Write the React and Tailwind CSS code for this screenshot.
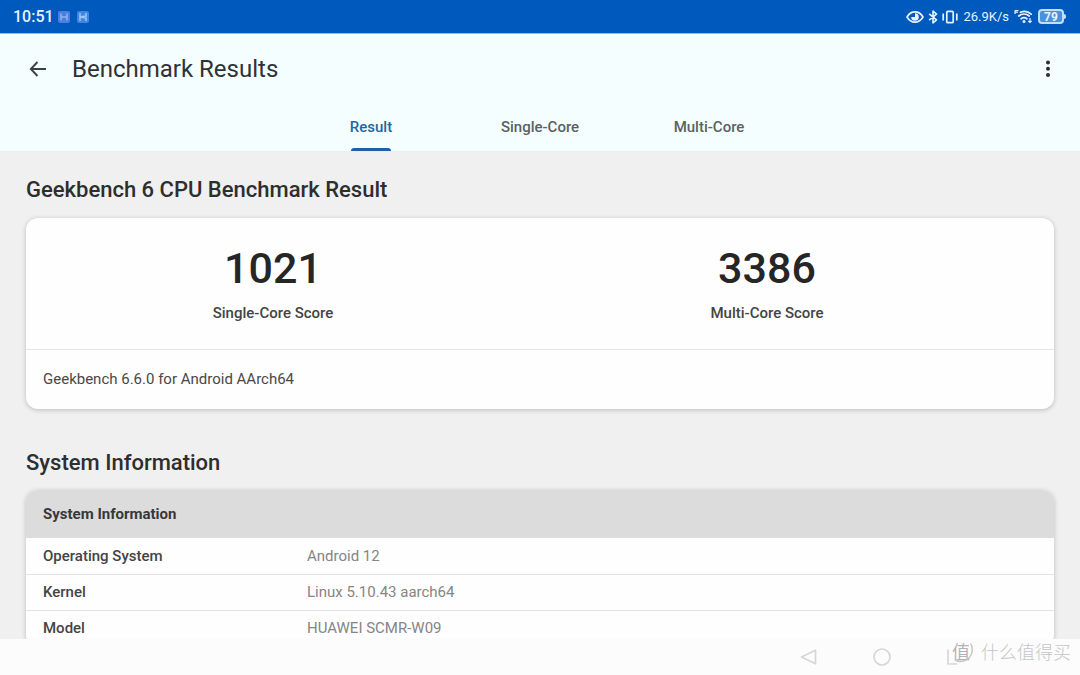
import { useState } from "react";

const TABS = ["Result", "Single-Core", "Multi-Core"];

const SCORES = [
  { value: "1021", label: "Single-Core Score" },
  { value: "3386", label: "Multi-Core Score" },
];

const SYSTEM_ROWS = [
  ["Operating System", "Android 12"],
  ["Kernel", "Linux 5.10.43 aarch64"],
  ["Model", "HUAWEI SCMR-W09"],
];

function EyeIcon() {
  return (
    <svg viewBox="0 0 18 14" className="h-[14px] w-[18px]" aria-hidden="true">
      <path d="M1 7C3 3.600 5.800 1.900 9 1.900S15 3.600 17 7c-2 3.400-4.800 5.100-8 5.100S3 10.400 1 7Z" fill="none" stroke="currentColor" strokeWidth="1.600" />
      <path d="M9 3.200A3.800 3.800 0 1 1 5.200 7H9Z" fill="currentColor" />
    </svg>
  );
}

function BluetoothIcon() {
  return (
    <svg viewBox="0 0 10 14" className="h-[14px] w-[10px]" aria-hidden="true">
      <path d="M1.200 3.800 8.500 9.800 5 13V1L8.500 4.200 1.200 10.200" fill="none" stroke="currentColor" strokeWidth="1.600" strokeLinejoin="round" />
    </svg>
  );
}

function VibrateIcon() {
  return (
    <svg viewBox="0 0 16 14" className="h-[14px] w-4" aria-hidden="true">
      <rect x="4.800" y="1.300" width="6.400" height="11.400" rx="1" fill="none" stroke="currentColor" strokeWidth="1.700" />
      <path d="M1.200 3.500v7M14.800 3.500v7" stroke="currentColor" strokeWidth="1.700" />
    </svg>
  );
}

function WifiIcon() {
  return (
    <svg viewBox="0 0 19 15" className="h-[15px] w-[19px]" aria-hidden="true">
      <g fill="none" stroke="currentColor" strokeWidth="1.700" strokeLinecap="round">
        <path d="M6.500 3.300c3.600-1.500 7.700-.8 10.700 1.900" />
        <path d="M4.800 7c3-2.700 7.400-2.700 10.400 0" />
        <path d="M7 9.800c1.800-1.500 4.200-1.500 6 0" />
      </g>
      <circle cx="10" cy="12.500" r="1.500" fill="currentColor" />
      <path d="M1 1.500h3.500M1 1.500V5M1 3.200h3" stroke="currentColor" strokeWidth="1.200" fill="none" />
      <path d="M16 9v4.500M14.300 11.800 16 13.500l1.700-1.700" stroke="currentColor" strokeWidth="1.200" fill="none" />
    </svg>
  );
}

function BackArrow() {
  return (
    <svg viewBox="0 0 20 20" className="size-5" aria-hidden="true">
      <path d="M18 10H2.800M9.500 3 2.800 10 9.500 17" fill="none" stroke="currentColor" strokeWidth="1.900" />
    </svg>
  );
}

function StatusBar() {
  return (
    <div className="flex h-[34px] shrink-0 items-center justify-between border-b border-[#8fc0ea] bg-[#0059bc] pr-[14px] pl-[13px] text-[#e6f3ff]">
      <div className="flex items-center gap-[7px]">
        <span className="text-[16px] font-medium">10:51</span>
        <div className="flex items-center gap-[7px]">
          <svg viewBox="0 0 12 12" className="-ml-[3px] size-3" aria-hidden="true">
            <rect width="12" height="12" rx="2" fill="#4b7fdf" />
            <path d="M3 2.500v7M9 2.500v7M3 6h6" stroke="#8fb2f2" strokeWidth="1.500" />
          </svg>
          <svg viewBox="0 0 12 12" className="size-3" aria-hidden="true">
            <rect width="12" height="12" rx="2" fill="#3f86e2" />
            <path d="M3 2v8M9 2v3L3 6l6 1v3" stroke="#9cc6f8" strokeWidth="1.500" fill="none" />
          </svg>
        </div>
      </div>
      <div className="flex items-center gap-[5px]">
        <div className="flex items-center gap-1">
          <EyeIcon />
          <BluetoothIcon />
          <VibrateIcon />
        </div>
        <span className="text-[13px]">26.9K/s</span>
        <WifiIcon />
        <div className="flex items-center">
          <span className="flex h-[15px] w-[26px] items-center justify-center rounded-[4px] border-2 border-[#c4defa] bg-[#4c90d8] text-[12px] leading-none font-bold">
            79
          </span>
          <span className="h-[5px] w-[2px] rounded-r-sm bg-[#c4defa]" />
        </div>
      </div>
    </div>
  );
}

function AppHeader({ active, onSelect }) {
  return (
    <header className="shrink-0 border-b border-[#e6eeee] bg-[#f4feff]">
      <div className="flex h-[69px] items-center pr-[22px] pl-7">
        <button type="button" aria-label="Back" className="text-[#3c4043]">
          <BackArrow />
        </button>
        <h1 className="ml-6 flex-1 text-[24px] leading-8 text-[#2f3234]">Benchmark Results</h1>
        <button type="button" aria-label="More options" className="flex h-6 w-5 items-center justify-center text-[#2b2e30]">
          <svg viewBox="0 0 6 20" className="h-5 w-[6px]" aria-hidden="true">
            <circle cx="3" cy="3.500" r="2" fill="currentColor" />
            <circle cx="3" cy="9.700" r="2" fill="currentColor" />
            <circle cx="3" cy="16" r="2" fill="currentColor" />
          </svg>
        </button>
      </div>
      <div role="tablist" className="flex justify-center">
        {TABS.map((tab) => {
          const selected = tab === active;
          return (
            <button
              key={tab}
              type="button"
              role="tab"
              aria-selected={selected}
              onClick={() => onSelect(tab)}
              className={`flex h-12 w-[169px] flex-col items-center justify-between pt-[14px] text-[15px] leading-5 font-medium ${selected ? "text-[#1f66a3]" : "text-[#5b6063]"}`}
            >
              {tab}
              {selected && <span className="h-[3px] w-10 rounded-t bg-[#1f5fa8]" />}
            </button>
          );
        })}
      </div>
    </header>
  );
}

function NavigationBar() {
  return (
    <nav className="relative flex h-9 shrink-0 items-center justify-end gap-[52px] bg-[#fcfcfc] pr-[116px] text-[#d6d6d6]">
      <button type="button" aria-label="Back">
        <svg viewBox="0 0 20 20" className="size-5" aria-hidden="true">
          <path d="M15.500 3.200v13.600L1.500 10Z" fill="none" stroke="currentColor" strokeWidth="1.700" strokeLinejoin="round" />
        </svg>
      </button>
      <button type="button" aria-label="Home">
        <svg viewBox="0 0 20 20" className="size-5" aria-hidden="true">
          <circle cx="10" cy="10" r="8" fill="none" stroke="currentColor" strokeWidth="1.700" />
        </svg>
      </button>
      <button type="button" aria-label="Recent apps">
        <svg viewBox="0 0 20 20" className="size-5" aria-hidden="true">
          <path d="M4 2.500V17h9" fill="none" stroke="currentColor" strokeWidth="1.700" />
        </svg>
      </button>
      <div className="absolute right-[9px] bottom-3 flex items-center gap-2 font-['Noto_Sans_CJK_SC',sans-serif] text-[#c6c6c6]">
        <span className="relative flex size-6 items-center justify-center text-[18px] leading-6 text-[#b4b4b4]">
          值
          <svg viewBox="0 0 24 24" className="absolute inset-0 size-6 overflow-visible" aria-hidden="true">
            <path d="M21.500 4.500c3.500 6 1.500 13.500-4.500 16.700-3 1.500-7 1.600-10 .3" fill="none" stroke="#c4c4c4" strokeWidth="1.400" />
          </svg>
        </span>
        <span className="text-[18px] leading-6 font-light">什么值得买</span>
      </div>
    </nav>
  );
}

export default function App() {
  const [active, setActive] = useState("Result");

  return (
    <div className="flex h-screen flex-col overflow-hidden bg-[#f0f0f0] font-[Roboto,sans-serif] text-[#2e2e2e]">
      <StatusBar />
      <AppHeader active={active} onSelect={setActive} />
      <main className="min-h-0 flex-1 overflow-hidden px-[26px] pt-6">
        <section>
          <h2 className="text-[22px] leading-7 font-medium">Geekbench 6 CPU Benchmark Result</h2>
          <div className="mt-[14px] rounded-xl bg-[#fefefe] shadow-[0_1px_5px_rgba(0,0,0,0.22)]">
            <div className="grid h-[132px] grid-cols-2 content-start border-b border-[#e6e6e6] pt-[22px] pr-10">
              {SCORES.map((score) => (
                <div key={score.label} className="flex flex-col items-center">
                  <span className="text-[43px] leading-14 font-medium text-[#262626]">{score.value}</span>
                  <span className="mt-[7px] text-[15px] leading-5 font-medium text-[#444444]">{score.label}</span>
                </div>
              ))}
            </div>
            <p className="px-[17px] pt-[19px] pb-5 text-[15px] leading-5 text-[#484848]">Geekbench 6.6.0 for Android AArch64</p>
          </div>
        </section>
        <section className="mt-10">
          <h2 className="text-[22px] leading-7 font-medium">System Information</h2>
          <div className="mt-[13px] overflow-hidden rounded-xl bg-[#fefefe] shadow-[0_1px_5px_rgba(0,0,0,0.22)]">
            <table className="w-full table-fixed text-left text-[15px] leading-5">
              <colgroup>
                <col className="w-[264px]" />
                <col />
              </colgroup>
              <thead>
                <tr className="h-12 bg-[#dcdcdc]">
                  <th colSpan={2} scope="colgroup" className="px-[17px] font-bold text-[#383838]">
                    System Information
                  </th>
                </tr>
              </thead>
              <tbody>
                {SYSTEM_ROWS.map(([name, value]) => (
                  <tr key={name} className="h-9 border-b border-[#e2e2e2]">
                    <th scope="row" className="px-[17px] font-medium text-[#444444]">{name}</th>
                    <td className="px-[17px] text-[#858585]">{value}</td>
                  </tr>
                ))}
              </tbody>
            </table>
          </div>
        </section>
      </main>
      <NavigationBar />
    </div>
  );
}
